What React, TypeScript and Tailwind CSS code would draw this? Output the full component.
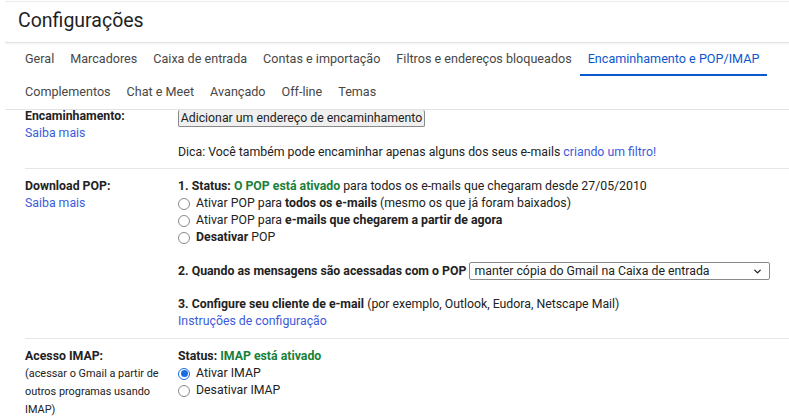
import { ChevronDown } from "lucide-react";

const tabsTop = [
  "Geral",
  "Marcadores",
  "Caixa de entrada",
  "Contas e importação",
  "Filtros e endereços bloqueados",
  "Encaminhamento e POP/IMAP",
];
const tabsBottom = ["Complementos", "Chat e Meet", "Avançado", "Off-line", "Temas"];

function Radio({ checked = false }: { checked?: boolean }) {
  return checked ? (
    <span className="flex h-[12px] w-[12px] shrink-0 items-center justify-center rounded-full border border-[#1a6ae0] bg-white">
      <span className="h-[7px] w-[7px] rounded-full bg-[#1a6ae0]" />
    </span>
  ) : (
    <span className="h-[12px] w-[12px] shrink-0 rounded-full border border-[#8a8a8a] bg-white" />
  );
}

function Option({ checked, children }: { checked?: boolean; children: React.ReactNode }) {
  return (
    <div className="flex h-[17px] items-center gap-[6px]">
      <Radio checked={checked} />
      <span>{children}</span>
    </div>
  );
}

export default function App() {
  return (
    <div className="h-[420px] w-[789px] overflow-hidden bg-white font-['Roboto',sans-serif] text-[#222]">
      <div className="ml-[5px] mt-px h-px bg-[#ececec]" />
      <div className="h-[40px] pl-[18px] pt-[7px] text-[19.5px] leading-[24px] text-[#1f1f1f]">
        Configurações
      </div>
      <div className="ml-[5px] h-px bg-[#e3e3e3] shadow-[0_1px_2px_rgba(0,0,0,0.08)]" />

      <div className="pl-[17px] text-[12.6px] text-[#474747]">
        <div className="flex h-[33px]">
          {tabsTop.map((t) => {
            const active = t === "Encaminhamento e POP/IMAP";
            return (
              <div
                key={t}
                className={
                  active
                    ? "flex items-center border-b-[2px] border-[#0b57d0] px-[8px] pt-[2px] text-[#0b57d0]"
                    : "flex items-center px-[8px]"
                }
              >
                {t}
              </div>
            );
          })}
        </div>
        <div className="flex h-[33px]">
          {tabsBottom.map((t) => (
            <div key={t} className="flex items-center px-[8px]">
              {t}
            </div>
          ))}
        </div>
      </div>
      <div className="ml-[5px] h-px bg-[#e3e3e3]" />

      <div className="pl-[25px] text-[12.3px] leading-[17px]">
        {/* encaminhamento */}
        <div className="flex h-[59px] border-b border-[#e6e6e6]">
          <div className="w-[153px] shrink-0">
            <div className="-mt-[2px] font-bold">Encaminhamento:</div>
            <div className="text-[#3b5bdb]">Saiba mais</div>
          </div>
          <div>
            <div className="flex h-[17px] w-[247px] items-center justify-center whitespace-nowrap rounded-[2px] border border-t-0 border-[#8a8a8a] bg-[#efefef]">
              Adicionar um endereço de encaminhamento
            </div>
            <div className="mt-[17px]">
              Dica: Você também pode encaminhar apenas alguns dos seus e-mails{" "}
              <span className="text-[#3b5bdb]">criando um filtro!</span>
            </div>
          </div>
        </div>

        {/* pop */}
        <div className="flex h-[170px] border-b border-[#e6e6e6] pt-[9px]">
          <div className="w-[153px] shrink-0">
            <div className="font-bold">Download POP:</div>
            <div className="text-[#3b5bdb]">Saiba mais</div>
          </div>
          <div className="flex-1">
            <div>
              <b>1. Status: </b>
              <b className="text-[#188038]">O POP está ativado</b> para todos os e-mails que chegaram desde
              27/05/2010
            </div>
            <Option>
              Ativar POP para <b>todos os e-mails</b> (mesmo os que já foram baixados)
            </Option>
            <Option>
              Ativar POP para <b>e-mails que chegarem a partir de agora</b>
            </Option>
            <Option>
              <b>Desativar</b> POP
            </Option>
            <div className="mt-[16px] flex items-center gap-[3px]">
              <b>2. Quando as mensagens são acessadas com o POP</b>
              <div className="flex h-[18px] w-[301px] shrink-0 items-center justify-between rounded-[2px] border border-[#8a8a8a] pl-[4px] pr-[6px]">
                <span>manter cópia do Gmail na Caixa de entrada</span>
                <ChevronDown className="h-[11px] w-[11px]" strokeWidth={3} />
              </div>
            </div>
            <div className="mt-[16px]">
              <b>3. Configure seu cliente de e-mail</b> (por exemplo, Outlook, Eudora, Netscape Mail)
            </div>
            <div className="text-[#3b5bdb]">Instruções de configuração</div>
          </div>
        </div>

        {/* imap */}
        <div className="flex pt-[9px]">
          <div className="w-[153px] shrink-0">
            <div className="font-bold">Acesso IMAP:</div>
            <div className="text-[10.9px] leading-[18px]">
              (acessar o Gmail a partir de
              <br />
              outros programas usando
              <br />
              IMAP)
            </div>
          </div>
          <div className="flex-1">
            <div>
              <b>Status: </b>
              <b className="text-[#188038]">IMAP está ativado</b>
            </div>
            <Option checked>Ativar IMAP</Option>
            <Option>Desativar IMAP</Option>
          </div>
        </div>
      </div>
    </div>
  );
}
